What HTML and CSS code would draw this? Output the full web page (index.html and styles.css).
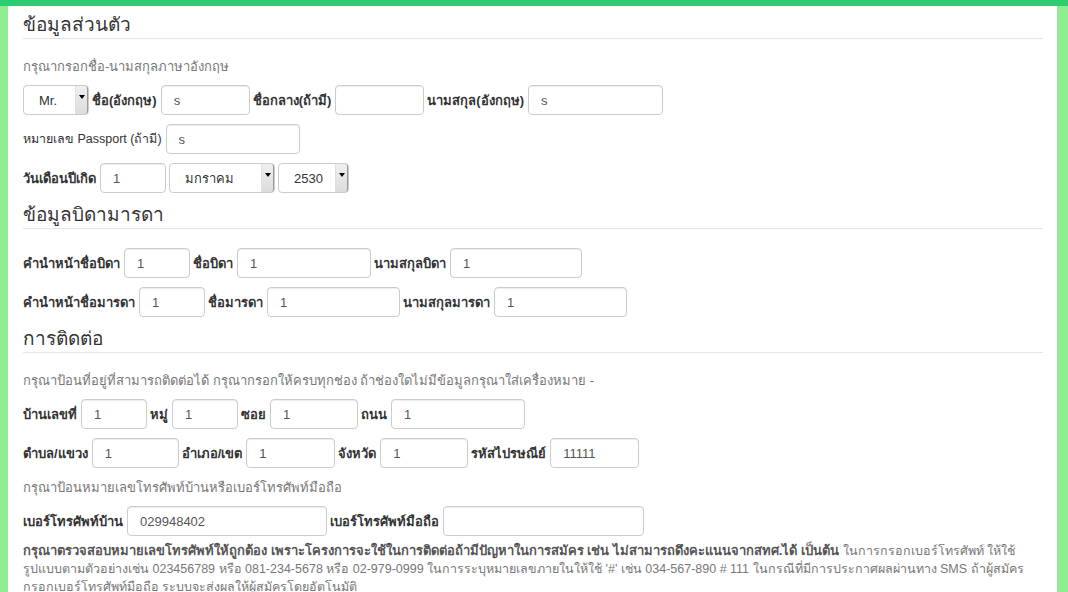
FILE: index.html
```html
<!DOCTYPE html>
<html lang="th">
<head>
  <meta charset="UTF-8">
  <meta name="viewport" content="width=device-width, initial-scale=1.0">
  <title>ข้อมูลผู้สมัคร</title>
  <link rel="stylesheet" href="styles.css">
</head>
<body>
<div class="page">

  <h3 class="page-header first">ข้อมูลส่วนตัว</h3>
  <p class="help">กรุณากรอกชื่อ-นามสกุลภาษาอังกฤษ</p>
  <div class="form-row">
    <span class="sel w-66"><select><option>Mr.</option><option>Mrs.</option><option>Miss</option></select></span>
    <label>ชื่อ(อังกฤษ)</label>
    <input class="w-89" type="text" value="s">
    <label>ชื่อกลาง(ถ้ามี)</label>
    <input class="w-89" type="text" value="">
    <label>นามสกุล(อังกฤษ)</label>
    <input class="w-135" type="text" value="s">
  </div>
  <div class="form-row">
    <label class="light">หมายเลข Passport (ถ้ามี)</label>
    <input class="w-134" type="text" value="s">
  </div>
  <div class="form-row">
    <label>วันเดือนปีเกิด</label>
    <input class="w-66" type="text" value="1">
    <span class="sel w-106"><select><option>มกราคม</option><option>กุมภาพันธ์</option></select></span>
    <span class="sel w-71"><select><option>2530</option><option>2531</option></select></span>
  </div>

  <h3 class="page-header">ข้อมูลบิดามารดา</h3>
  <div class="form-row">
    <label>คำนำหน้าชื่อบิดา</label>
    <input class="w-66" type="text" value="1">
    <label>ชื่อบิดา</label>
    <input class="w-134" type="text" value="1">
    <label>นามสกุลบิดา</label>
    <input class="w-132" type="text" value="1">
  </div>
  <div class="form-row">
    <label>คำนำหน้าชื่อมารดา</label>
    <input class="w-66" type="text" value="1">
    <label>ชื่อมารดา</label>
    <input class="w-133" type="text" value="1">
    <label>นามสกุลมารดา</label>
    <input class="w-133" type="text" value="1">
  </div>

  <h3 class="page-header">การติดต่อ</h3>
  <p class="help">กรุณาป้อนที่อยู่ที่สามารถติดต่อได้ กรุณากรอกให้ครบทุกช่อง ถ้าช่องใดไม่มีข้อมูลกรุณาใส่เครื่องหมาย -</p>
  <div class="form-row">
    <label>บ้านเลขที่</label>
    <input class="w-66" type="text" value="1">
    <label>หมู่</label>
    <input class="w-66" type="text" value="1">
    <label>ซอย</label>
    <input class="w-88" type="text" value="1">
    <label>ถนน</label>
    <input class="w-134" type="text" value="1">
  </div>
  <div class="form-row">
    <label>ตำบล/แขวง</label>
    <input class="w-87" type="text" value="1">
    <label>อำเภอ/เขต</label>
    <input class="w-89" type="text" value="1">
    <label>จังหวัด</label>
    <input class="w-88" type="text" value="1">
    <label>รหัสไปรษณีย์</label>
    <input class="w-89" type="text" value="11111">
  </div>
  <p class="help">กรุณาป้อนหมายเลขโทรศัพท์บ้านหรือเบอร์โทรศัพท์มือถือ</p>
  <div class="form-row">
    <label>เบอร์โทรศัพท์บ้าน</label>
    <input class="w-200" type="text" value="029948402">
    <label>เบอร์โทรศัพท์มือถือ</label>
    <input class="w-201" type="text" value="">
  </div>
  <p class="note"><strong>กรุณาตรวจสอบหมายเลขโทรศัพท์ให้ถูกต้อง เพราะโครงการจะใช้ในการติดต่อถ้ามีปัญหาในการสมัคร เช่น ไม่สามารถดึงคะแนนจากสทศ.ได้ เป็นต้น</strong> <span class="small">ในการกรอกเบอร์โทรศัพท์ ให้ใช้ <span class="nw">รูปแบบ</span>ตามตัวอย่างเช่น 023456789 หรือ 081-234-5678 หรือ 02-979-0999 ในการระบุหมายเลขภายในให้ใช้ '#' เช่น 034-567-890 # 111 ในกรณีที่มีการประกาศผลผ่านทาง SMS ถ้า<span class="nw">ผู้สมัคร</span> กรอกเบอร์โทรศัพท์มือถือ ระบบจะส่งผลให้ผู้สมัครโดยอัตโนมัติ</span></p>

</div>
</body>
</html>
```

FILE: styles.css
```css
* {
  box-sizing: border-box;
}
body {
  margin: 0;
  font-family: 'Liberation Sans', Arial, sans-serif;
  font-size: 13px;
  color: #333;
  background: #2ecc71;
  padding-top: 6px;
}
.page {
  background: #fff;
  border-left: 8px solid #90ee90;
  border-right: 11px solid #90ee90;
  padding: 0 14px 20px 15px;
  min-height: 586px;
}
.page-header {
  font-size: 19px;
  font-weight: normal;
  color: #333;
  line-height: 23px;
  margin: 10px 0 19px;
  padding-bottom: 2px;
  border-bottom: 1px solid #e5e5e5;
}
.page-header.first {
  margin-top: 0;
  padding-top: 7px;
}
.help {
  color: #777;
  margin: 0 0 9px;
  line-height: 18px;
}
.form-row + .help {
  margin-top: 11px;
}
.form-row {
  display: flex;
  align-items: center;
  gap: 3px;
  height: 30px;
  margin-bottom: 9px;
}
.form-row label {
  font-weight: bold;
  margin-right: 1px;
}
.form-row label.light {
  font-weight: normal;
  font-size: 12.5px;
}
.form-row input {
  height: 30px;
  padding: 4px 12px;
  font-family: inherit;
  font-size: 13px;
  color: #555;
  border: 1px solid #ccc;
  border-radius: 4px;
  box-shadow: inset 0 1px 1px rgba(0, 0, 0, 0.075);
  background: #fff;
}
.sel {
  position: relative;
  display: inline-block;
  height: 30px;
}
.sel select {
  -webkit-appearance: none;
  appearance: none;
  width: 100%;
  height: 30px;
  padding: 4px 12px 4px 15px;
  font-family: inherit;
  font-size: 13px;
  color: #333;
  background: #fff;
  border: 1px solid #ccc;
  border-radius: 4px;
}
.sel::after {
  content: "";
  position: absolute;
  top: 1px;
  right: 1px;
  bottom: 1px;
  width: 11px;
  background: linear-gradient(#f0f0f0, #dcdcdc);
  border-left: 1px solid #e0e0e0;
  border-right: 1px solid #999;
  border-radius: 0 3px 3px 0;
  pointer-events: none;
}
.sel::before {
  content: "";
  position: absolute;
  top: 10px;
  right: 4px;
  z-index: 1;
  border-left: 3px solid transparent;
  border-right: 3px solid transparent;
  border-top: 4px solid #000;
  pointer-events: none;
}
.note {
  color: #777;
  margin: -3px 0 0;
  line-height: 17px;
}
.note strong {
  color: #555;
}
.note .small {
  font-size: 12.5px;
}
.nw {
  white-space: nowrap;
}
.w-66 { width: 66px; }
.w-71 { width: 71px; }
.w-87 { width: 87px; }
.w-88 { width: 88px; }
.w-89 { width: 89px; }
.w-106 { width: 106px; }
.w-132 { width: 132px; }
.w-133 { width: 133px; }
.w-134 { width: 134px; }
.w-135 { width: 135px; }
.w-200 { width: 200px; }
.w-201 { width: 201px; }
```
